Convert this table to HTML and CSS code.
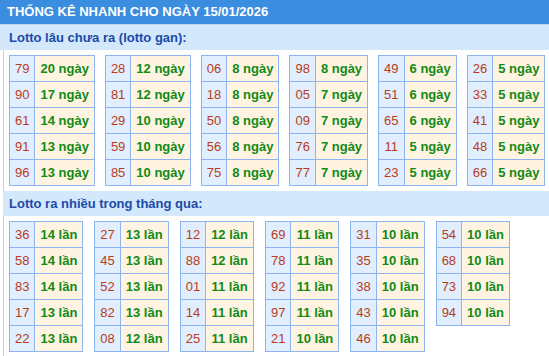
FILE: index.html
```html
<!DOCTYPE html>
<html lang="vi">
<head>
<meta charset="utf-8">
<title>Thống kê nhanh</title>
<link rel="stylesheet" href="styles.css">
</head>
<body>
<div class="header">THỐNG KÊ NHANH CHO NGÀY 15/01/2026</div>
<div class="band">Lotto lâu chưa ra (lotto gan):</div>
<div class="content">
  <div class="tables tables-gan">
    <table><tr><td class="n">79</td><td class="t">20 ngày</td></tr><tr><td class="n">90</td><td class="t">17 ngày</td></tr><tr><td class="n">61</td><td class="t">14 ngày</td></tr><tr><td class="n">91</td><td class="t">13 ngày</td></tr><tr><td class="n">96</td><td class="t">13 ngày</td></tr></table>
    <table><tr><td class="n">28</td><td class="t">12 ngày</td></tr><tr><td class="n">81</td><td class="t">12 ngày</td></tr><tr><td class="n">29</td><td class="t">10 ngày</td></tr><tr><td class="n">59</td><td class="t">10 ngày</td></tr><tr><td class="n">85</td><td class="t">10 ngày</td></tr></table>
    <table><tr><td class="n">06</td><td class="t">8 ngày</td></tr><tr><td class="n">18</td><td class="t">8 ngày</td></tr><tr><td class="n">50</td><td class="t">8 ngày</td></tr><tr><td class="n">56</td><td class="t">8 ngày</td></tr><tr><td class="n">75</td><td class="t">8 ngày</td></tr></table>
    <table><tr><td class="n">98</td><td class="t">8 ngày</td></tr><tr><td class="n">05</td><td class="t">7 ngày</td></tr><tr><td class="n">09</td><td class="t">7 ngày</td></tr><tr><td class="n">76</td><td class="t">7 ngày</td></tr><tr><td class="n">77</td><td class="t">7 ngày</td></tr></table>
    <table><tr><td class="n">49</td><td class="t">6 ngày</td></tr><tr><td class="n">51</td><td class="t">6 ngày</td></tr><tr><td class="n">65</td><td class="t">6 ngày</td></tr><tr><td class="n">11</td><td class="t">5 ngày</td></tr><tr><td class="n">23</td><td class="t">5 ngày</td></tr></table>
    <table><tr><td class="n">26</td><td class="t">5 ngày</td></tr><tr><td class="n">33</td><td class="t">5 ngày</td></tr><tr><td class="n">41</td><td class="t">5 ngày</td></tr><tr><td class="n">48</td><td class="t">5 ngày</td></tr><tr><td class="n">66</td><td class="t">5 ngày</td></tr></table>
  </div>
  <div class="band band2">Lotto ra nhiều trong tháng qua:</div>
  <div class="tables">
    <table><tr><td class="n">36</td><td class="t">14 lần</td></tr><tr><td class="n">58</td><td class="t">14 lần</td></tr><tr><td class="n">83</td><td class="t">14 lần</td></tr><tr><td class="n">17</td><td class="t">13 lần</td></tr><tr><td class="n">22</td><td class="t">13 lần</td></tr></table>
    <table><tr><td class="n">27</td><td class="t">13 lần</td></tr><tr><td class="n">45</td><td class="t">13 lần</td></tr><tr><td class="n">52</td><td class="t">13 lần</td></tr><tr><td class="n">82</td><td class="t">13 lần</td></tr><tr><td class="n">08</td><td class="t">12 lần</td></tr></table>
    <table><tr><td class="n">12</td><td class="t">12 lần</td></tr><tr><td class="n">88</td><td class="t">12 lần</td></tr><tr><td class="n">01</td><td class="t">11 lần</td></tr><tr><td class="n">14</td><td class="t">11 lần</td></tr><tr><td class="n">25</td><td class="t">11 lần</td></tr></table>
    <table><tr><td class="n">69</td><td class="t">11 lần</td></tr><tr><td class="n">78</td><td class="t">11 lần</td></tr><tr><td class="n">92</td><td class="t">11 lần</td></tr><tr><td class="n">97</td><td class="t">11 lần</td></tr><tr><td class="n">21</td><td class="t">10 lần</td></tr></table>
    <table><tr><td class="n">31</td><td class="t">10 lần</td></tr><tr><td class="n">35</td><td class="t">10 lần</td></tr><tr><td class="n">38</td><td class="t">10 lần</td></tr><tr><td class="n">43</td><td class="t">10 lần</td></tr><tr><td class="n">46</td><td class="t">10 lần</td></tr></table>
    <table><tr><td class="n">54</td><td class="t">10 lần</td></tr><tr><td class="n">68</td><td class="t">10 lần</td></tr><tr><td class="n">73</td><td class="t">10 lần</td></tr><tr><td class="n">94</td><td class="t">10 lần</td></tr></table>
  </div>
</div>
</body>
</html>
```
FILE: styles.css
```css
html, body {
  margin: 0;
  padding: 0;
  background: #ffffff;
  font-family: "Liberation Sans", Arial, sans-serif;
}
.header {
  height: 24px;
  line-height: 24px;
  padding-left: 7px;
  background: #3a8ddf;
  border-bottom: 1px solid #c4d6ea;
  color: #ffffff;
  font-size: 13px;
  font-weight: bold;
  white-space: nowrap;
}
.band {
  height: 25px;
  line-height: 25px;
  padding-left: 9px;
  background: #d4e8fc;
  color: #1b4aa8;
  font-size: 13px;
  font-weight: bold;
}
.band2 {
  margin: 5px 0 5px -1px;
  padding-left: 6px;
}
.content {
  margin-left: 3px;
  padding-top: 5px;
  border-left: 1px solid #c6d0dc;
  min-height: 306px;
}
.tables {
  display: flex;
  align-items: flex-start;
  gap: 11px;
  padding-left: 5px;
}
.tables-gan {
  gap: 10px;
}
table {
  border-collapse: collapse;
}
td {
  height: 25px;
  padding: 0 5px;
  border: 1px solid #8db3f1;
  text-align: center;
  font-size: 13px;
  white-space: nowrap;
}
td.n {
  background: #e0eefd;
  color: #b83c1c;
}
td.t {
  background: #fff4e2;
  color: #128a16;
  font-weight: bold;
}
```
